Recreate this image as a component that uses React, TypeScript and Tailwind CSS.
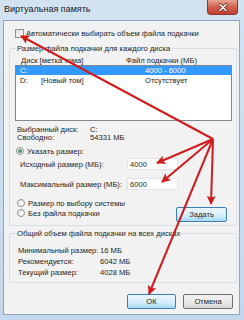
import React from "react";

function Radio({ checked }: { checked?: boolean }) {
  return (
    <span className="w-[8px] h-[8px] rounded-full border border-[#8e8f8f] bg-gradient-to-br from-[#e6e6e6] to-[#ffffff] flex items-center justify-center shrink-0">
      {checked && <span className="w-[4px] h-[4px] rounded-full bg-gradient-to-br from-[#8fcf6a] to-[#1a5a8a]" />}
    </span>
  );
}

export default function App() {
  const lines: [number, number][] = [
    [21, 36],
    [157, 163],
    [162, 182],
    [211, 204],
    [149, 294],
  ];
  const cx = 213;
  const cy = 139;
  return (
    <div className="relative w-[244px] h-[320px] overflow-hidden bg-gradient-to-b from-[#d3e2f1] to-[#c4d7ec] font-['Liberation_Sans',Arial,sans-serif] text-[#1e1e1e] flex flex-col">
      <div className="h-[20px] flex items-start shrink-0">
        <div className="pl-[4px] pt-[4px] text-[9px] leading-[11px] text-[#1a1a1a]">Виртуальная память</div>
        <div className="ml-auto mr-[6px] w-[31px] h-[15px] rounded-b-[4px] border border-t-0 border-[#8a3a30] bg-gradient-to-b from-[#e8a696] via-[#d0604c] to-[#c2402e] flex items-center justify-center">
          <svg width="10" height="9" viewBox="0 0 10 9">
            <path d="M2 1.5 L8 7.5 M8 1.5 L2 7.5" stroke="#6a2a22" strokeWidth="3" strokeLinecap="round" />
            <path d="M2 1.5 L8 7.5 M8 1.5 L2 7.5" stroke="#ffffff" strokeWidth="1.6" strokeLinecap="round" />
          </svg>
        </div>
      </div>
      <div className="ml-[3px] mr-[4px] mb-[5px] flex-1 border border-[#8fa4bd] bg-[#f2f2f2] flex flex-col text-[7.6px] leading-[9px]">
        <div className="mt-[8px] h-[9px] flex items-center pl-[11px] gap-[2px]">
          <span className="w-[9px] h-[9px] border border-[#8e8f8f] bg-gradient-to-br from-[#dcdcdc] to-[#ffffff] shrink-0" />
          <span>Автоматически выбирать объем файла подкачки</span>
        </div>

        <div className="relative mt-[10px] ml-[5px] w-[228px] border border-[#d5dfe5] rounded-[2px] flex flex-col pb-[3px]">
          <span className="absolute top-[-5px] left-[6px] px-[1px] bg-[#f2f2f2]">Размер файла подкачки для каждого диска</span>
          <div className="mt-[6px] h-[10px] flex items-center pl-[11px]">
            <span className="w-[105px]">Диск [метка тома]</span>
            <span>Файл подкачки (МБ)</span>
          </div>
          <div className="ml-[5px] w-[217px] h-[56px] bg-white border border-[#828790] flex flex-col">
            <div className="h-[9px] bg-[#3399ff] text-white flex items-center pl-[4px]">
              <span className="w-[125px]">C:</span>
              <span>4000 - 6000</span>
            </div>
            <div className="h-[10px] flex items-center pl-[4px]">
              <span className="w-[21px]">D:</span>
              <span className="w-[104px]">[Новый том]</span>
              <span>Отсутствует</span>
            </div>
          </div>
          <div className="mt-[4px] h-[8px] flex items-center pl-[7px]">
            <span className="w-[73px]">Выбранный диск:</span>
            <span>C:</span>
          </div>
          <div className="h-[8px] flex items-center pl-[7px]">
            <span className="w-[73px]">Свободно:</span>
            <span>54331 МБ</span>
          </div>
          <div className="mt-[5px] h-[10px] flex items-center pl-[6px] gap-[3px]">
            <Radio checked />
            <span>Указать размер:</span>
          </div>
          <div className="mt-[2px] h-[12px] flex items-center pl-[10px]">
            <span className="w-[107px]">Исходный размер (МБ):</span>
            <span className="w-[51px] h-[12px] bg-white border border-[#e2e3ea] flex items-center pl-[2px]">4000</span>
          </div>
          <div className="mt-[8px] h-[12px] flex items-center pl-[10px]">
            <span className="w-[107px]">Максимальный размер (МБ):</span>
            <span className="w-[51px] h-[12px] bg-white border border-[#e2e3ea] flex items-center pl-[2px]">6000</span>
          </div>
          <div className="mt-[8px] h-[24px] flex">
            <div className="flex flex-col">
              <div className="h-[10px] flex items-center pl-[7px] gap-[3px]">
                <Radio />
                <span>Размер по выбору системы</span>
              </div>
              <div className="h-[10px] flex items-center pl-[7px] gap-[3px]">
                <Radio />
                <span>Без файла подкачки</span>
              </div>
            </div>
            <div className="ml-auto mr-[9px] self-end w-[51px] h-[15px] rounded-[2px] border border-[#3c7fb1] bg-gradient-to-b from-[#eaf6fd] via-[#d9f0fc] to-[#a7d9f5] flex items-center justify-center">
              Задать
            </div>
          </div>
        </div>

        <div className="relative mt-[7px] ml-[5px] w-[228px] border border-[#d5dfe5] rounded-[2px] flex flex-col pb-[4px]">
          <span className="absolute top-[-5px] left-[6px] px-[1px] bg-[#f2f2f2]">Общий объем файла подкачки на всех дисках</span>
          <div className="mt-[11px] h-[11px] flex items-center pl-[8px]">
            <span className="w-[82px]">Минимальный размер:</span>
            <span>16 МБ</span>
          </div>
          <div className="h-[11px] flex items-center pl-[8px]">
            <span className="w-[82px]">Рекомендуется:</span>
            <span>6042 МБ</span>
          </div>
          <div className="h-[11px] flex items-center pl-[8px]">
            <span className="w-[82px]">Текущий размер:</span>
            <span>4028 МБ</span>
          </div>
        </div>

        <div className="mt-[11px] h-[15px] flex justify-end gap-[7px] pr-[6px]">
          <div className="w-[49px] h-[15px] rounded-[2px] border border-[#3c7fb1] bg-gradient-to-b from-[#eaf6fd] via-[#d9f0fc] to-[#a7d9f5] flex items-center justify-center">
            ОК
          </div>
          <div className="w-[50px] h-[15px] rounded-[2px] border border-[#707070] bg-gradient-to-b from-[#f2f2f2] via-[#ebebeb] to-[#d5d5d5] flex items-center justify-center">
            Отмена
          </div>
        </div>
      </div>

      <svg className="absolute inset-0 pointer-events-none" width="244" height="320" viewBox="0 0 244 320">
        <defs>
          <marker id="ah" viewBox="0 0 10 10" refX="9" refY="5" markerWidth="11" markerHeight="9" markerUnits="userSpaceOnUse" orient="auto">
            <path d="M0 0 L10 5 L0 10 L2 5 Z" fill="#d01c1c" />
          </marker>
        </defs>
        {lines.map(([x, y], i) => (
          <line key={i} x1={cx} y1={cy} x2={x} y2={y} stroke="#d01c1c" strokeWidth="2" markerEnd="url(#ah)" />
        ))}
      </svg>
    </div>
  );
}
